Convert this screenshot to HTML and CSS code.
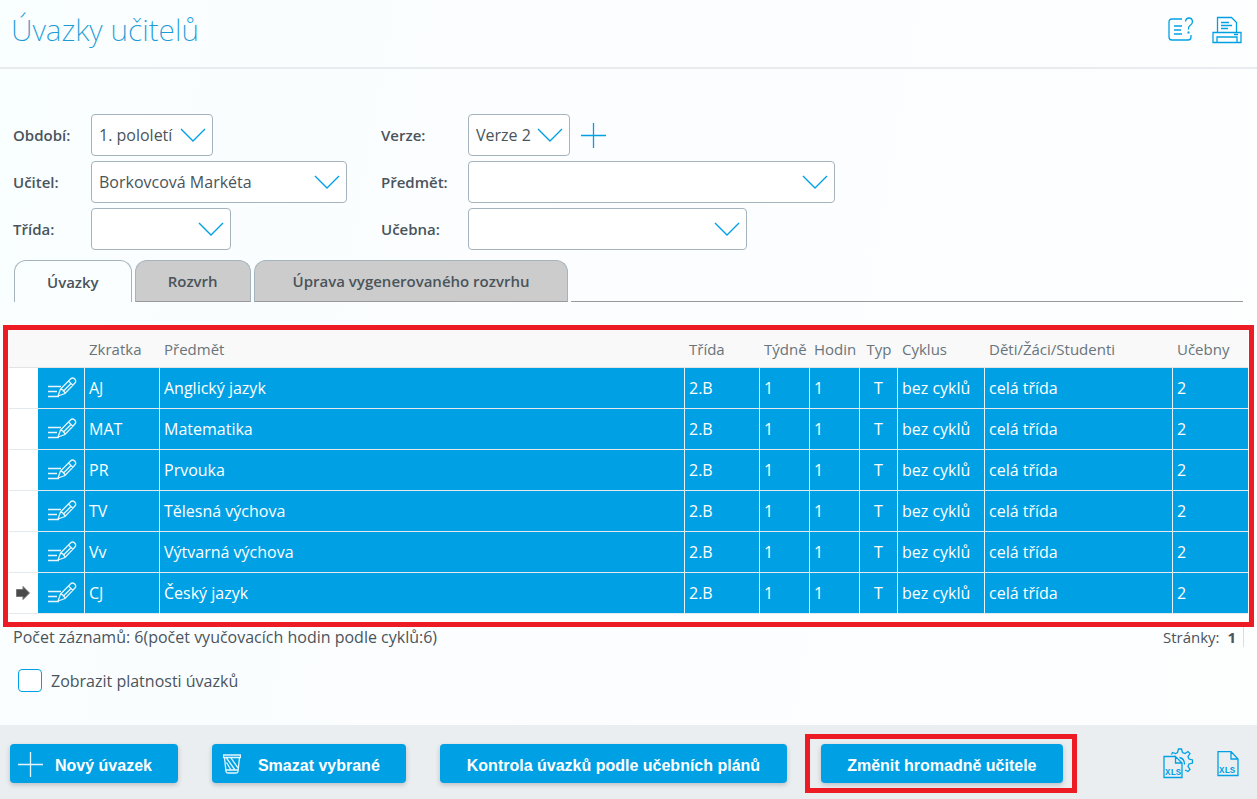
FILE: index.html
```html
<!DOCTYPE html>
<html lang="cs">
<head>
<meta charset="utf-8">
<title>Úvazky učitelů</title>
<link rel="stylesheet" href="styles.css">
</head>
<body>
<svg class="sprite" aria-hidden="true">
  <symbol id="edit" viewBox="0 0 30 22">
    <path d="M1 9.500h13M1 14.500h9M1 19.500h11"/>
    <path d="M11 19l2.500-7L23.500 2q2-2 4.200 0 2 2.200 0 4.200L18 16.500zM13.500 12q3.700.8 4.500 4.500M21.500 4l4.500 4.500M16 14.500L24 6.500"/>
  </symbol>
</svg>
<header class="top">
  <h1>Úvazky učitelů</h1>
  <div class="tools">
    <button class="icon" aria-label="Nápověda"><svg width="26" height="26" viewBox="0 0 26 26"><path d="M14 2H4Q1 2 1 5v15q0 3 3 3h16q3 0 3-3v-2M6 9h8M6 13h7M6 17h8"/><path d="M17.500 4.500Q18 1 21 1t3.500 3.500Q24.500 7 22 8.500q-2 1.500-1.500 4"/><path class="dot" d="M19.500 14.500h2v2h-2z"/></svg></button>
    <button class="icon" aria-label="Tisk"><svg width="30" height="28" viewBox="0 0 30 28"><path d="M5.500 16V1.500h14l5 5V16M1 16.500h28v10H1zM5 26v-5h20v5M22 18.500h4M9 6.500h8M9 9.500h11M9 12.500h7"/></svg></button>
  </div>
</header>
<main>
  <form class="filters">
    <label for="obdobi">Období:</label>
    <select id="obdobi" class="w-122"><option>1. pololetí</option></select>
    <label for="verze">Verze:</label>
    <div class="field"><select id="verze" class="w-102"><option>Verze 2</option></select>
      <button type="button" class="icon" aria-label="Přidat verzi"><svg width="25" height="25" viewBox="0 0 25 25"><path d="M0 12.500h25M12.500 0v25"/></svg></button></div>
    <label for="ucitel">Učitel:</label>
    <select id="ucitel" class="w-256"><option>Borkovcová Markéta</option></select>
    <label for="predmet">Předmět:</label>
    <select id="predmet" class="w-367"><option></option></select>
    <label for="trida">Třída:</label>
    <select id="trida" class="w-140"><option></option></select>
    <label for="ucebna">Učebna:</label>
    <select id="ucebna" class="w-279"><option></option></select>
  </form>
  <nav class="tabs">
    <button class="tab active">Úvazky</button>
    <button class="tab">Rozvrh</button>
    <button class="tab wide">Úprava vygenerovaného rozvrhu</button>
    <span class="tab-line"></span>
  </nav>
  <div class="table-frame">
    <table>
      <colgroup><col class="c-29"><col class="c-47"><col class="c-75"><col><col class="c-75"><col class="c-50"><col class="c-50"><col class="c-38"><col class="c-87"><col class="c-188"><col class="c-75"></colgroup>
      <thead><tr><th></th><th></th><th>Zkratka</th><th>Předmět</th><th>Třída</th><th>Týdně</th><th>Hodin</th><th class="mid">Typ</th><th>Cyklus</th><th>Děti/Žáci/Studenti</th><th>Učebny</th></tr></thead>
      <tbody>
        <tr><td class="mark"></td><td class="edit"><svg width="30" height="22"><use href="#edit"/></svg></td><td>AJ</td><td>Anglický jazyk</td><td>2.B</td><td>1</td><td>1</td><td class="mid">T</td><td>bez cyklů</td><td>celá třída</td><td>2</td></tr>
        <tr><td class="mark"></td><td class="edit"><svg width="30" height="22"><use href="#edit"/></svg></td><td>MAT</td><td>Matematika</td><td>2.B</td><td>1</td><td>1</td><td class="mid">T</td><td>bez cyklů</td><td>celá třída</td><td>2</td></tr>
        <tr><td class="mark"></td><td class="edit"><svg width="30" height="22"><use href="#edit"/></svg></td><td>PR</td><td>Prvouka</td><td>2.B</td><td>1</td><td>1</td><td class="mid">T</td><td>bez cyklů</td><td>celá třída</td><td>2</td></tr>
        <tr><td class="mark"></td><td class="edit"><svg width="30" height="22"><use href="#edit"/></svg></td><td>TV</td><td>Tělesná výchova</td><td>2.B</td><td>1</td><td>1</td><td class="mid">T</td><td>bez cyklů</td><td>celá třída</td><td>2</td></tr>
        <tr><td class="mark"></td><td class="edit"><svg width="30" height="22"><use href="#edit"/></svg></td><td>Vv</td><td>Výtvarná výchova</td><td>2.B</td><td>1</td><td>1</td><td class="mid">T</td><td>bez cyklů</td><td>celá třída</td><td>2</td></tr>
        <tr><td class="mark"><svg width="14" height="14" viewBox="0 0 14 14"><path d="M.5 3.500h6.500V.5L13.500 7 7 13.500v-3H.5z"/></svg></td><td class="edit"><svg width="30" height="22"><use href="#edit"/></svg></td><td>CJ</td><td>Český jazyk</td><td>2.B</td><td>1</td><td>1</td><td class="mid">T</td><td>bez cyklů</td><td>celá třída</td><td>2</td></tr>
      </tbody>
    </table>
  </div>
  <div class="summary">
    <span>Počet záznamů: 6(počet vyučovacích hodin podle cyklů:6)</span>
    <span class="pages">Stránky: <b>1</b></span>
  </div>
  <label class="check"><input type="checkbox"> Zobrazit platnosti úvazků</label>
</main>
<footer>
  <button class="btn add"><svg width="25" height="25" viewBox="0 0 25 25"><path d="M0 12.500h25M12.500 0v25"/></svg>Nový úvazek</button>
  <button class="btn del"><svg width="18" height="20" viewBox="0 0 18 20"><path d="M.5 1h17v2.500H.5zM1.500 3.500L3 17.500q0 1.500 2 1.500h8q2 0 2-1.500l1.500-14M3 16h12M3.500 4L12 16M3.500 8.500L8 16M8 4l7 10"/></svg>Smazat vybrané</button>
  <button class="btn">Kontrola úvazků podle učebních plánů</button>
  <div class="btn-frame"><button class="btn">Změnit hromadně učitele</button></div>
  <div class="exports">
    <button class="icon" aria-label="Nastavení exportu XLS"><svg width="31" height="31" viewBox="0 0 31 31"><path d="M12 8.500H1v21h18V15l-6.500-6.500V15H19"/><path d="M8.500 6.500l1-2 3 1 2-1L15.500 1h3l1 3.500 2.500 1 3-2 2 2-2 3 1 2.500 3.500 1v3l-3.500 1-1 2.500 2 3-2 2-3-1.500M16.500 9.500q5 1 5 7"/><text x="2" y="27">XLS</text></svg></button>
    <button class="icon" aria-label="Export XLS"><svg width="22" height="26" viewBox="0 0 22 26"><path d="M14 .5H1v24h20V8L14 .5V8h7"/><text x="2" y="22">XLS</text></svg></button>
  </div>
</footer>
</body>
</html>
```
FILE: styles.css
```css
* { box-sizing: border-box; }
body {
  margin: 0;
  min-height: 100vh;
  display: flex;
  flex-direction: column;
  background: linear-gradient(100deg, #f9feff, #fcfdff 50%, #fdfefe);
  color: #4a545b;
  font: 16px/20px "Open Sans", "Noto Sans", sans-serif;
}
button, select, input { font: inherit; color: inherit; }
svg { display: block; fill: none; stroke: #00a1e4; stroke-width: 1.3; }
.sprite { display: none; }
.dot { fill: #00a1e4; stroke: none; }
.icon { padding: 0; border: 0; background: none; }
.icon text { fill: #00a1e4; stroke: none; font: bold 9px "Liberation Mono", monospace; }

.top {
  display: flex;
  justify-content: space-between;
  align-items: center;
  height: 69px;
  padding: 0 15px 7px 11px;
  border-bottom: 2px solid #e8ecee;
}
h1 {
  margin: 0;
  color: #1a9bd8;
  font-family: "Noto Sans", "Open Sans", sans-serif;
  font-size: 30px;
  font-weight: 200;
  line-height: 40px;
}
.tools { display: flex; align-items: center; gap: 18px; }

main { flex: 1; }
.filters {
  display: grid;
  grid-template-columns: 78px 290px 87px 1fr;
  row-gap: 5px;
  align-items: center;
  padding: 45px 13px 0;
}
.filters label { font-size: 15px; font-weight: 600; }
.field { display: flex; align-items: center; gap: 11px; }
select {
  height: 42px;
  padding: 0 34px 0 7px;
  border: 1px solid #a5b4bc;
  border-radius: 4px;
  appearance: none;
  background: #fff url("data:image/svg+xml,%3Csvg xmlns='http://www.w3.org/2000/svg' width='26' height='14'%3E%3Cpath d='M1 1l12 12L25 1' fill='none' stroke='%2300a1e4' stroke-width='1.4'/%3E%3C/svg%3E") no-repeat right 6px center;
}
.w-102 { width: 102px; }
.w-122 { width: 122px; }
.w-140 { width: 140px; }
.w-256 { width: 256px; }
.w-279 { width: 279px; }
.w-367 { width: 367px; }

.tabs {
  display: flex;
  align-items: flex-end;
  gap: 3px;
  padding: 10px 14px 0;
}
.tab {
  height: 42px;
  padding: 0 32px;
  border: 1px solid #a5b4bc;
  border-bottom-color: #999;
  border-radius: 12px 12px 0 0;
  background: #ccc;
  font-size: 15px;
  font-weight: 600;
}
.tab.active { border-bottom: 0; background: none; }
.tab.wide { padding: 0 38px; }
.tab-line { flex: 1; border-bottom: 1px solid #999; }

.table-frame {
  margin: 23px 3px 0;
  padding: 0 1px 8px;
  border: 5px solid #ed1c24;
  background: #fff;
}
table { width: 100%; border-collapse: separate; border-spacing: 0; table-layout: fixed; }
.c-29 { width: 29px; }
.c-38 { width: 38px; }
.c-47 { width: 47px; }
.c-50 { width: 50px; }
.c-75 { width: 75px; }
.c-87 { width: 87px; }
.c-188 { width: 188px; }
th, td { padding: 0 0 0 4px; text-align: left; white-space: nowrap; }
th {
  height: 38px;
  border-bottom: 1px solid #e3e3e3;
  background: #f9f9f9;
  color: #68747b;
  font-size: 15px;
  font-weight: 400;
}
td {
  height: 41px;
  border-bottom: 1px solid #e3e9ec;
  border-right: 1px solid #e3f4fc;
  background: #00a1e4;
  color: #fff;
}
td:last-child { border-right: 0; }
th.mid, td.mid { padding: 0; text-align: center; }
td.mark { padding-left: 7px; border-right: 0; background: #fff; }
.mark svg { fill: #4a4a4a; stroke: #777; stroke-width: 1; }
td.edit { padding-left: 9px; }
.edit svg { stroke: #e6f6fd; }

.summary {
  display: flex;
  justify-content: space-between;
  padding: 0 13px;
}
.pages { padding-right: 7px; border-right: 1px solid #ddd; font-size: 15px; }
.pages b { margin-left: 4px; }
.check {
  display: flex;
  align-items: center;
  gap: 9px;
  width: max-content;
  margin: 22px 0 0 18px;
}
.check input {
  width: 24px;
  height: 23px;
  margin: 0;
  border: 1px solid #00a1e4;
  border-radius: 4px;
  appearance: none;
  background: #fff;
}

footer {
  display: flex;
  align-items: center;
  gap: 34px;
  height: 74px;
  padding: 3px 18px 0 10px;
  background: #ebeef0;
}
.btn {
  display: flex;
  align-items: center;
  height: 39px;
  padding: 4px 27px 0;
  border: 0;
  border-radius: 4px;
  background: #00a1e4;
  box-shadow: 0 2px 5px #0003;
  color: #fff;
  font: bold 16px/20px "Liberation Sans", Arial, sans-serif;
  white-space: nowrap;
}
.btn svg { margin-top: -3px; stroke: #e6f6fd; }
.add { gap: 12px; padding-left: 8px; padding-right: 26px; }
.del { gap: 17px; padding-left: 11px; padding-right: 26px; }
.btn-frame {
  margin-left: -16px;
  padding: 5px 9px 5px 11px;
  border: 5px solid #ed1c24;
}
.btn-frame .btn { padding: 4px 26px 0; }
.exports { display: flex; align-items: center; gap: 23px; margin-left: auto; }
```
